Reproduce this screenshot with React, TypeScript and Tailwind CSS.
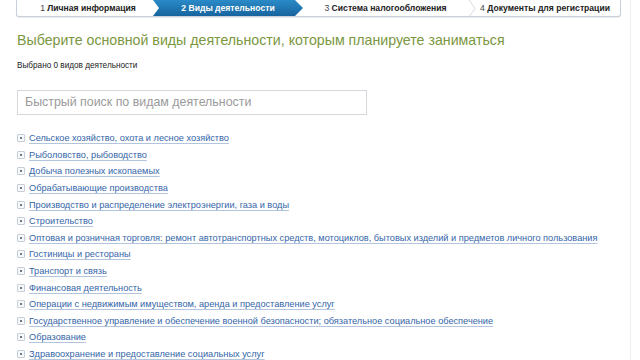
import React from 'react';

const activities = [
  'Сельское хозяйство, охота и лесное хозяйство',
  'Рыболовство, рыбоводство',
  'Добыча полезных ископаемых',
  'Обрабатывающие производства',
  'Производство и распределение электроэнергии, газа и воды',
  'Строительство',
  'Оптовая и розничная торговля: ремонт автотранспортных средств, мотоциклов, бытовых изделий и предметов личного пользования',
  'Гостиницы и рестораны',
  'Транспорт и связь',
  'Финансовая деятельность',
  'Операции с недвижимым имуществом, аренда и предоставление услуг',
  'Государственное управление и обеспечение военной безопасности; обязательное социальное обеспечение',
  'Образование',
  'Здравоохранение и предоставление социальных услуг',
];

function PlusBox() {
  return (
    <span className="w-[8px] h-[8px] border border-[#c8ced6] rounded-[1px] bg-[#f7f8fa] flex items-center justify-center shrink-0">
      <span className="w-[2px] h-[2px] bg-[#6a7888]" />
    </span>
  );
}

function Steps() {
  return (
    <div className="ml-[16px] w-[605px] h-[17px] flex items-stretch border border-t-0 border-[#c9d0d8] rounded-b-[3px] bg-white shadow-[0_1px_1px_rgba(0,0,0,0.08)] text-[8.6px] font-bold text-[#222] whitespace-nowrap">
      <div className="w-[142px] flex items-center justify-center">
        <span>
          <span className="font-normal text-[#444]">1</span> Личная информация
        </span>
      </div>
      <div className="w-[150px] -ml-[6px] flex items-center justify-center text-white bg-gradient-to-b from-[#2a8bc8] to-[#17649e] [clip-path:polygon(0_0,142px_0,150px_50%,142px_100%,0_100%,6px_50%)]">
        2 Виды деятельности
      </div>
      <div className="w-[165px] flex items-center justify-center">
        <span>
          <span className="font-normal text-[#444]">3</span> Система налогообложения
        </span>
      </div>
      <svg width="8" height="17" viewBox="0 0 8 17" className="shrink-0">
        <path d="M1 0 L7 8.5 L1 17" fill="none" stroke="#d5dbe1" strokeWidth="1" />
      </svg>
      <div className="flex-1 flex items-center justify-center pr-[6px]">
        <span>
          <span className="font-normal text-[#444]">4</span> Документы для регистрации
        </span>
      </div>
    </div>
  );
}

export default function App() {
  return (
    <div className="w-[640px] h-[360px] overflow-hidden bg-white font-['Liberation_Sans',Arial,sans-serif]">
      <div className="w-[631px] h-full border-r border-[#eef0f2]">
        <Steps />
        <div className="px-[17px]">
          <h1 className="mt-[13px] text-[14.2px] leading-[20px] text-[#7b973f] whitespace-nowrap">
            Выберите основной виды деятельности, которым планируете заниматься
          </h1>
          <p className="mt-[10px] text-[8.2px] leading-[12px] text-[#222]">Выбрано 0 видов деятельности</p>
          <div className="mt-[18px] w-[350px] h-[25px] border border-[#d4d8dc] flex items-center px-[7px] text-[12.4px] text-[#9a9a9a]">
            Быстрый поиск по видам деятельности
          </div>
          <ul className="mt-[15px] flex flex-col">
            {activities.map((a) => (
              <li key={a} className="h-[16.6px] flex items-center gap-[4px]">
                <PlusBox />
                <span className="text-[9.2px] leading-[12px] text-[#3465a8] underline decoration-[#b3c4dd] underline-offset-2 whitespace-nowrap">
                  {a}
                </span>
              </li>
            ))}
          </ul>
        </div>
      </div>
    </div>
  );
}
